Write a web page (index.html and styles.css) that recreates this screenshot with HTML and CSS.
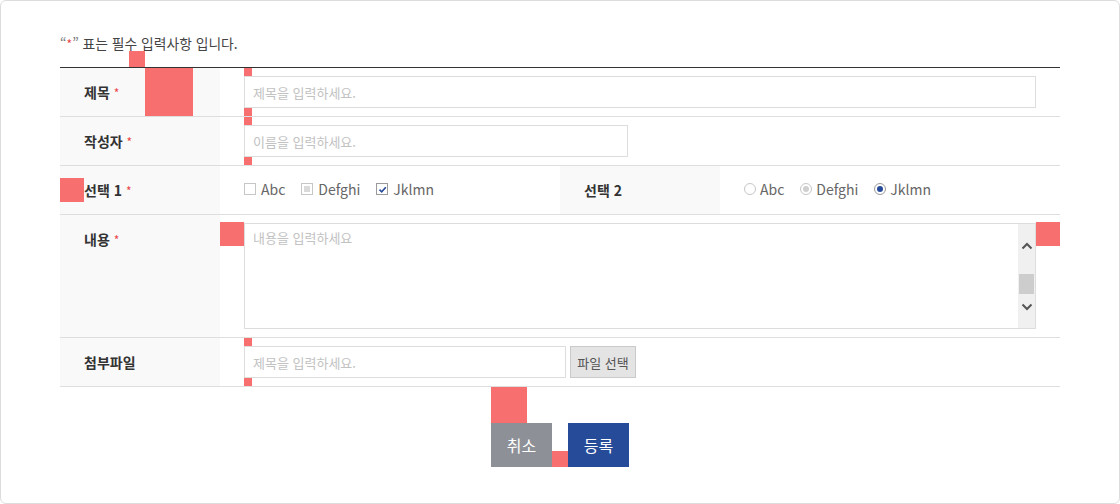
FILE: index.html
```html
<!DOCTYPE html>
<html lang="ko">
<head>
<meta charset="utf-8">
<title>글쓰기</title>
<link rel="stylesheet" href="styles.css">
</head>
<body>
<div class="card">
  <p class="note"><span class="q">“</span><span class="req">*</span><span class="q">”</span> 표는 필수 입력사항 입니다.</p>
  <table class="form">
    <colgroup><col class="c-th"><col class="c-td"><col class="c-th"><col class="c-td"></colgroup>
    <tr>
      <th>제목 <span class="req">*</span></th>
      <td colspan="3"><input class="inp full" type="text" placeholder="제목을 입력하세요."></td>
    </tr>
    <tr>
      <th>작성자 <span class="req">*</span></th>
      <td colspan="3"><input class="inp name" type="text" placeholder="이름을 입력하세요."></td>
    </tr>
    <tr>
      <th>선택 1 <span class="req">*</span></th>
      <td>
        <div class="opts">
          <span class="opt"><span class="cb"></span>Abc</span>
          <span class="opt"><span class="cb dis"><span class="cb-fill"></span></span>Defghi</span>
          <span class="opt"><span class="cb on"><svg viewBox="0 0 9 9" width="9" height="9"><path d="M1.5 4.6 L3.7 6.8 L7.8 2.2" fill="none" stroke="#264a99" stroke-width="1.6"/></svg></span>Jklmn</span>
        </div>
      </td>
      <th>선택 2</th>
      <td>
        <div class="opts">
          <span class="opt"><span class="rd"></span>Abc</span>
          <span class="opt"><span class="rd dis"><span class="dot"></span></span>Defghi</span>
          <span class="opt"><span class="rd on"><span class="dot"></span></span>Jklmn</span>
        </div>
      </td>
    </tr>
    <tr>
      <th>내용 <span class="req">*</span></th>
      <td colspan="3">
        <div class="ta-wrap">
          <textarea class="ta" placeholder="내용을 입력하세요"></textarea>
          <div class="sbar">
            <svg class="arr" viewBox="0 0 12 8" width="12" height="8"><path d="M1.5 6.5 L6 2 L10.5 6.5" fill="none" stroke="#555" stroke-width="2"/></svg>
            <span class="thumb"></span>
            <svg class="arr down" viewBox="0 0 12 8" width="12" height="8"><path d="M1.5 1.5 L6 6 L10.5 1.5" fill="none" stroke="#555" stroke-width="2"/></svg>
          </div>
        </div>
      </td>
    </tr>
    <tr>
      <th>첨부파일</th>
      <td colspan="3">
        <div class="file">
          <input class="inp fname" type="text" placeholder="제목을 입력하세요.">
          <button class="fbtn" type="button">파일 선택</button>
        </div>
      </td>
    </tr>
  </table>
  <div class="actions">
    <button class="btn cancel" type="button">취소</button>
    <button class="btn submit" type="button">등록</button>
  </div>

  <span class="mk m1"></span>
  <span class="mk m2"></span>
  <span class="mk m3a"></span>
  <span class="mk m3b"></span>
  <span class="mk m4a"></span>
  <span class="mk m4b"></span>
  <span class="mk m5"></span>
  <span class="mk m6"></span>
  <span class="mk m7"></span>
  <span class="mk m8a"></span>
  <span class="mk m8b"></span>
  <span class="mk m9"></span>
  <span class="mk m10"></span>
</div>
</body>
</html>
```

FILE: styles.css
```css
* { box-sizing: border-box; }
html, body { margin: 0; padding: 0; background: #fff; }
body {
  font-family: "Noto Sans CJK KR", "Noto Sans", sans-serif;
  color: #333;
}
.card {
  position: relative;
  width: 1120px;
  height: 504px;
  border: 1px solid #dcdcdc;
  border-radius: 6px;
  padding: 34px 59px 0;
  background: #fff;
}
.note {
  margin: 0 0 16px;
  font-size: 13.8px;
  line-height: 16px;
  height: 16px;
  color: #444;
}
.note .q { color: #777; }
.req { color: #e9474a; font-size: 12px; font-weight: 400; line-height: 1; }

.form {
  width: 1000px;
  table-layout: fixed;
  border-collapse: collapse;
  border-top: 1px solid #333;
}
.c-th { width: 160px; }
.c-td { width: 340px; }
.form tr { border-bottom: 1px solid #dedede; }
.form th {
  background: #f9f9f9;
  text-align: left;
  vertical-align: top;
  padding: 8px 24px;
  font-size: 14px;
  font-weight: 700;
  line-height: 32px;
  height: 48px;
  color: #333;
}
.form td {
  vertical-align: top;
  padding: 8px 24px;
  line-height: 32px;
  height: 48px;
}
.inp {
  display: block;
  height: 32px;
  border: 1px solid #dddddd;
  padding: 0 8px;
  font-family: inherit;
  font-size: 13px;
  color: #333;
  background: #fff;
  outline: none;
}
.inp::placeholder { color: #c2c2c2; }
.full { width: 100%; }
.name { width: 384px; }
.fname { width: 322px; }

.opts { display: flex; align-items: center; height: 30px; line-height: 20px; }
.opt {
  display: inline-flex;
  align-items: center;
  margin-right: 16px;
  font-size: 14px;
  color: #666;
}
.cb {
  width: 12px; height: 12px;
  border: 1px solid #c6c6c6;
  background: #fff;
  margin-right: 5px;
  display: inline-flex;
  align-items: center;
  justify-content: center;
  flex: none;
}
.cb.dis { padding: 2px; }
.cb-fill { display: block; width: 100%; height: 100%; background: #dadada; }
.cb.on { border-color: #9a9a9a; }
.rd {
  width: 12px; height: 12px;
  border: 1px solid #c6c6c6;
  border-radius: 50%;
  background: #fff;
  margin-right: 4px;
  display: inline-flex;
  align-items: center;
  justify-content: center;
  flex: none;
}
.rd .dot { width: 6px; height: 6px; border-radius: 50%; }
.rd.dis .dot { background: #cfcfcf; }
.rd.on { border-color: #9a9a9a; }
.rd.on .dot { background: #264a99; }

.ta-wrap {
  display: flex;
  height: 106px;
  border: 1px solid #dddddd;
  background: #fff;
}
.ta {
  flex: 1;
  border: none;
  resize: none;
  outline: none;
  padding: 4px 8px;
  font-family: inherit;
  font-size: 13px;
  line-height: 20px;
  color: #333;
}
.ta::placeholder { color: #c2c2c2; }
.sbar {
  width: 17px;
  background: #f0f0f0;
  display: flex;
  flex-direction: column;
  align-items: center;
}
.arr { display: block; margin-top: 18px; }
.arr.down { margin-top: auto; margin-bottom: 17px; }
.thumb { display: block; width: 15px; height: 20px; background: #cdcdcd; margin-top: 24px; }

.file { display: flex; align-items: center; }
.fbtn {
  margin-left: 4px;
  width: 66px;
  height: 32px;
  border: 1px solid #cacaca;
  background: #e4e4e4;
  font-family: inherit;
  font-size: 13px;
  color: #555;
  padding: 0;
}

.actions {
  display: flex;
  justify-content: center;
  gap: 16px;
  margin-top: 36px;
}
.btn {
  height: 44px;
  border: none;
  padding: 0;
  font-family: inherit;
  font-size: 16px;
  color: #fff;
}
.cancel { width: 61px; background: #8d9096; }
.submit { width: 61px; background: #264b99; }

.mk { position: absolute; background: #f76f6f; }
.m1 { left: 128px; top: 50px; width: 16px; height: 16px; }
.m2 { left: 144px; top: 67px; width: 48px; height: 48px; }
.m3a { left: 243px; top: 67px; width: 8px; height: 8px; }
.m3b { left: 243px; top: 107px; width: 8px; height: 8px; }
.m4a { left: 243px; top: 116px; width: 8px; height: 8px; }
.m4b { left: 243px; top: 156px; width: 8px; height: 8px; }
.m5 { left: 59px; top: 177px; width: 24px; height: 24px; }
.m6 { left: 219px; top: 221px; width: 24px; height: 24px; }
.m7 { left: 1035px; top: 221px; width: 24px; height: 24px; }
.m8a { left: 243px; top: 337px; width: 8px; height: 8px; }
.m8b { left: 243px; top: 377px; width: 8px; height: 8px; }
.m9 { left: 490px; top: 386px; width: 36px; height: 36px; }
.m10 { left: 551px; top: 450px; width: 16px; height: 16px; }
```
